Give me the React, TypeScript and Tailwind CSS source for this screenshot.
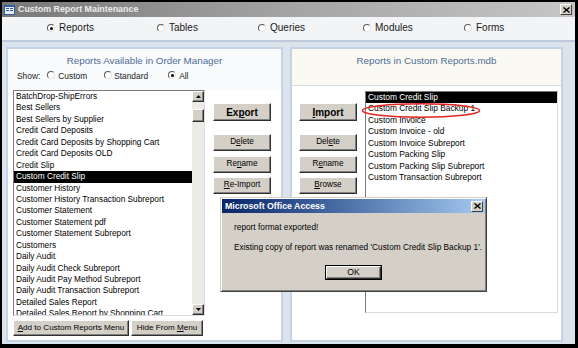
import React from 'react';

const leftItems = [
  'BatchDrop-ShipErrors',
  'Best Sellers',
  'Best Sellers by Supplier',
  'Credit Card Deposits',
  'Credit Card Deposits by Shopping Cart',
  'Credit Card Deposits OLD',
  'Credit Slip',
  'Custom Credit Slip',
  'Customer History',
  'Customer History Transaction Subreport',
  'Customer Statement',
  'Customer Statement pdf',
  'Customer Statement Subreport',
  'Customers',
  'Daily Audit',
  'Daily Audit Check Subreport',
  'Daily Audit Pay Method Subreport',
  'Daily Audit Transaction Subreport',
  'Detailed Sales Report',
  'Detailed Sales Report by Shopping Cart',
];

const rightItems = [
  'Custom Credit Slip',
  'Custom Credit Slip Backup 1',
  'Custom Invoice',
  'Custom Invoice - old',
  'Custom Invoice Subreport',
  'Custom Packing Slip',
  'Custom Packing Slip Subreport',
  'Custom Transaction Subreport',
];

const Radio = ({ checked = false }: { checked?: boolean }) => (
  <span className="relative inline-block w-[8px] h-[8px] rounded-full border border-t-[#5a5a5a] border-l-[#5a5a5a] border-r-[#e4e4e4] border-b-[#e4e4e4] bg-white">
    {checked && <span className="absolute left-[1.5px] top-[1.5px] w-[3px] h-[3px] rounded-full bg-black" />}
  </span>
);

// label with one underlined access key
const Key = ({ text, at }: { text: string; at: number }) => (
  <span className="whitespace-nowrap">
    {text.slice(0, at)}
    <span className="underline underline-offset-1">{text[at]}</span>
    {text.slice(at + 1)}
  </span>
);

const Btn = ({ children, className = '' }: { children: React.ReactNode; className?: string }) => (
  <div
    className={`flex items-center justify-center bg-[#d4d0c8] border border-t-white border-l-white border-r-[#303030] border-b-[#303030] shadow-[inset_-1px_-1px_0_#808080] text-black ${className}`}
  >
    {children}
  </div>
);

const CloseBox = () => (
  <div className="flex items-center justify-center w-[12px] h-[11px] bg-[#d4d0c8] border border-t-white border-l-white border-r-[#404040] border-b-[#404040]">
    <svg width="7" height="6" viewBox="0 0 7 6">
      <path d="M0.5 0.5 L6.5 5.5 M6.5 0.5 L0.5 5.5" stroke="#000" strokeWidth="1.4" />
    </svg>
  </div>
);

export default function App() {
  return (
    <div className="w-[578px] h-[348px] bg-black pt-[2px] pl-[2px] pr-[3px] pb-[4px] font-['Liberation_Sans',Arial,sans-serif]">
      <div className="relative flex h-full flex-col bg-[#dbe3ed]">
        {/* title bar */}
        <div className="flex h-[15px] items-center justify-between bg-gradient-to-r from-[#787878] via-[#a4a4a4] to-[#c6c6c6] pl-[2px] pr-[3px]">
          <div className="flex items-center gap-[3px]">
            <svg width="11" height="10" viewBox="0 0 11 10">
              <rect x="0" y="0" width="11" height="10" fill="#2f5f9e" />
              <rect x="1" y="2" width="9" height="7" fill="#e8eef8" />
              <rect x="2" y="3" width="3" height="1" fill="#2f5f9e" />
              <rect x="2" y="5" width="3" height="1" fill="#2f5f9e" />
              <rect x="6" y="3" width="3" height="1" fill="#2f5f9e" />
              <rect x="6" y="5" width="3" height="1" fill="#2f5f9e" />
            </svg>
            <span className="text-[8.9px] font-bold text-[#ececec] leading-none">Custom Report Maintenance</span>
          </div>
          <CloseBox />
        </div>

        {/* object type radios */}
        <div className="relative h-[25px] bg-[#f3f4f6] border-b-2 border-[#bccadb] text-[10px] text-[#1a1a1a]">
          {[
            { l: 45, t: 'Reports', c: true },
            { l: 155, t: 'Tables' },
            { l: 256, t: 'Queries' },
            { l: 361, t: 'Modules' },
            { l: 462, t: 'Forms' },
          ].map((r) => (
            <div key={r.t} className="absolute top-[5px] flex items-center gap-[4px] leading-[12px]" style={{ left: r.l }}>
              <Radio checked={r.c} />
              <span>{r.t}</span>
            </div>
          ))}
        </div>

        {/* panels */}
        <div className="flex flex-1 gap-[7px] pl-[4px] pt-[5px] pb-[2px]">
          {/* left panel */}
          <div className="flex w-[277px] flex-col border-2 border-[#c6d3e4] bg-white">
            <div className="h-[41px] bg-[#f9fafc] pt-[6px]">
              <div className="text-center text-[9.8px] leading-[12px] text-[#4f6c98]">Reports Available in Order Manager</div>
              <div className="mt-[3px] flex items-center text-[8.4px] leading-[12px] text-[#1a1a1a] pl-[9px]">
                <span>Show:</span>
                <span className="ml-[7px]"><Radio /></span>
                <span className="ml-[3px]">Custom</span>
                <span className="ml-[17px]"><Radio /></span>
                <span className="ml-[2px]">Standard</span>
                <span className="ml-[20px]"><Radio checked /></span>
                <span className="ml-[3px]">All</span>
              </div>
            </div>
            <div className="flex pl-[5px]">
              <div className="flex w-[192px] flex-col">
                <div className="relative h-[226px] overflow-hidden border border-t-[#7a7a7a] border-l-[#7a7a7a] border-r-[#dcdcdc] border-b-[#dcdcdc] bg-white">
                  <div className="pr-[12px]">
                    {leftItems.map((it) => (
                      <div
                        key={it}
                        className={`h-[11.45px] pl-[2px] text-[8.3px] leading-[11.45px] whitespace-nowrap ${
                          it === 'Custom Credit Slip' ? 'bg-black text-white' : 'text-black'
                        }`}
                      >
                        {it}
                      </div>
                    ))}
                  </div>
                  <div className="absolute right-0 top-0 bottom-0 flex w-[12px] flex-col bg-[#ecebe6]">
                    <Btn className="h-[11px] w-[12px]">
                      <svg width="5" height="3" viewBox="0 0 5 3"><path d="M2.5 0 L5 3 L0 3 Z" fill="#000" /></svg>
                    </Btn>
                    <Btn className="mt-[7px] h-[13px] w-[12px]">{null}</Btn>
                    <div className="flex-1" />
                    <Btn className="h-[11px] w-[12px]">
                      <svg width="5" height="3" viewBox="0 0 5 3"><path d="M0 0 L5 0 L2.5 3 Z" fill="#000" /></svg>
                    </Btn>
                  </div>
                </div>
                <div className="mt-[4px] flex gap-[2px] text-[8.1px]">
                  <Btn className="h-[16px] w-[116px]"><Key text="Add to Custom Reports Menu" at={0} /></Btn>
                  <Btn className="h-[16px] w-[72px]"><Key text="Hide From Menu" at={10} /></Btn>
                </div>
              </div>
              <div className="ml-[8px] flex w-[58px] flex-col pt-[13px] text-[8.2px]">
                <Btn className="h-[18px] text-[10px] font-bold"><Key text="Export" at={2} /></Btn>
                <Btn className="mt-[13px] h-[17px]"><Key text="Delete" at={1} /></Btn>
                <Btn className="mt-[5px] h-[17px]"><Key text="Rename" at={2} /></Btn>
                <Btn className="mt-[4px] h-[17px]"><Key text="Re-Import" at={0} /></Btn>
              </div>
            </div>
          </div>

          {/* right panel */}
          <div className="flex w-[273px] flex-col border-2 border-[#c6d3e4] bg-white">
            <div className="h-[37px] border-b border-[#d3dbe5] bg-[#fafaf2] pt-[6px]">
              <div className="text-center text-[9.8px] leading-[12px] text-[#4f6c98]">Reports in Custom Reports.mdb</div>
            </div>
            <div className="flex pl-[7px]">
              <div className="flex w-[58px] flex-col pt-[17px] text-[8.2px]">
                <Btn className="h-[18px] text-[10px] font-bold"><Key text="Import" at={0} /></Btn>
                <Btn className="mt-[13px] h-[17px]"><Key text="Delete" at={3} /></Btn>
                <Btn className="mt-[5px] h-[17px]"><Key text="Rename" at={1} /></Btn>
                <Btn className="mt-[4px] h-[17px]"><Key text="Browse" at={0} /></Btn>
              </div>
              <div className="ml-[8px] mt-[5px] h-[222px] w-[193px] overflow-hidden border border-t-[#7a7a7a] border-l-[#7a7a7a] border-r-[#dcdcdc] border-b-[#dcdcdc] bg-white">
                {rightItems.map((it, i) => (
                  <div
                    key={it}
                    className={`h-[11.45px] pl-[2px] text-[8.4px] leading-[11.45px] whitespace-nowrap ${
                      i === 0 ? 'bg-black text-white' : 'text-black'
                    }`}
                  >
                    {it}
                  </div>
                ))}
              </div>
            </div>
          </div>
        </div>

        {/* red highlight around the renamed copy */}
        <svg className="absolute left-[359px] top-[100px]" width="120" height="17" viewBox="0 0 120 17">
          <ellipse cx="60" cy="8.5" rx="58.5" ry="6.8" fill="none" stroke="#e3231d" strokeWidth="1.6" />
        </svg>

        {/* message box */}
        <div className="absolute left-[218px] top-[195px] flex h-[95px] w-[267px] flex-col border border-t-[#d4d0c8] border-l-[#d4d0c8] border-r-[#404040] border-b-[#404040] bg-[#d4d0c8] p-[1px] shadow-[inset_1px_1px_0_#fff,inset_-1px_-1px_0_#808080]">
          <div className="flex h-[14px] items-center justify-between bg-gradient-to-r from-[#0a246a] to-[#a6caf0] pl-[3px] pr-[2px]">
            <span className="text-[8.8px] font-bold leading-none text-white">Microsoft Office Access</span>
            <CloseBox />
          </div>
          <div className="whitespace-nowrap pl-[12px] text-[8.3px] leading-[12px] text-black">
            <div className="mt-[8px]">report format exported!</div>
            <div className="mt-[8px]">Existing copy of report was renamed 'Custom Credit Slip Backup 1'.</div>
          </div>
          <div className="mt-[12px] flex justify-center">
            <div className="border border-black">
              <Btn className="h-[13px] w-[55px] text-[8.6px]">OK</Btn>
            </div>
          </div>
        </div>
      </div>
    </div>
  );
}
